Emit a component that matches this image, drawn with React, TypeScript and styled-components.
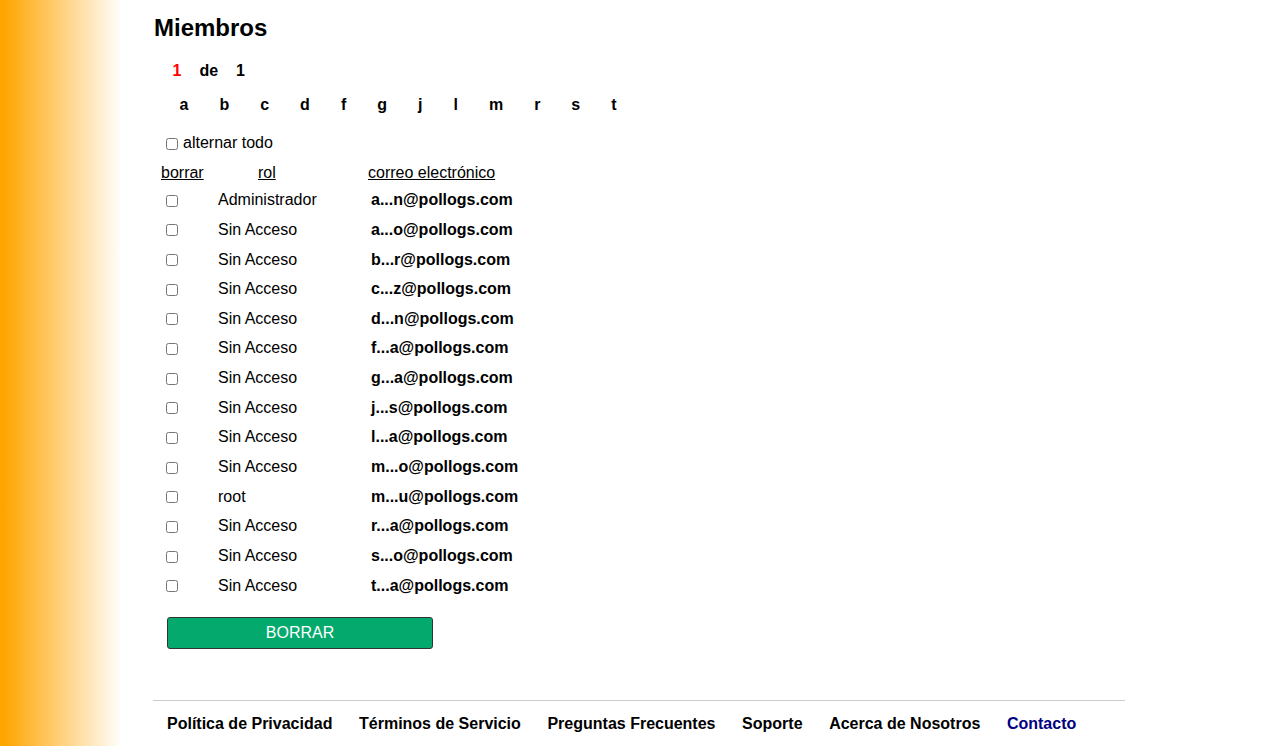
import React from "react";
import styled, { createGlobalStyle } from "styled-components";

// ---------- Global ----------

const GlobalStyle = createGlobalStyle`
  html, body {
    margin: 0;
    padding: 0;
    background: #fff;
  }
  body {
    font-family: "Liberation Sans", Arial, sans-serif;
    font-size: 16px;
    color: #000;
  }
`;

// ---------- Styled Components ----------

const Page = styled.div`
  display: flex;
  min-height: 100vh;
`;

const Sidebar = styled.aside`
  flex: 0 0 125px;
  background: linear-gradient(to right, #ffa500 4px, #ffffff 122px);
`;

const Main = styled.main`
  flex: 1;
  padding-left: 28px;
`;

const Content = styled.div`
  width: 972px;
  display: flex;
  flex-direction: column;
`;

const Title = styled.h2`
  margin: 14px 0 0;
  padding-left: 1px;
  font-size: 24px;
  line-height: 28px;
  font-weight: bold;
`;

const Pager = styled.div`
  display: flex;
  gap: 18px;
  margin-top: 19px;
  padding-left: 19.5px;
  line-height: 20px;
  font-weight: bold;
`;

const PagerItem = styled.span<{ $current?: boolean }>`
  color: ${(p) => (p.$current ? "#ff0000" : "#000")};
`;

const Letters = styled.div`
  display: flex;
  gap: 31px;
  margin-top: 13.5px;
  padding-left: 26.5px;
  line-height: 20px;
  font-weight: bold;
`;

const LetterLink = styled.a`
  color: #000;
  text-decoration: none;
  cursor: pointer;
`;

const ToggleAll = styled.label`
  display: flex;
  align-items: center;
  gap: 5px;
  margin-top: 18.3px;
  padding-left: 13px;
  line-height: 20px;
`;

const Check = styled.input.attrs({ type: "checkbox" })`
  width: 12px;
  height: 12px;
  margin: 0;
  flex: none;
`;

const ToggleCheck = styled(Check)`
  margin-top: 2px;
`;

const HeaderRow = styled.div`
  display: grid;
  grid-template-columns: 97px 110px 1fr;
  margin-top: 10.2px;
  padding-left: 8px;
  line-height: 20px;
`;

const HeaderLink = styled.a`
  color: #000;
  text-decoration: underline;
  justify-self: start;
  cursor: pointer;
`;

const MemberList = styled.div`
  display: flex;
  flex-direction: column;
  margin-top: 2.4px;
`;

const MemberRow = styled.div`
  display: grid;
  grid-template-columns: 52px 153px 1fr;
  align-items: center;
  height: 29.67px;
  padding-left: 13px;
  line-height: 20px;
`;

const RowCheck = styled(Check)`
  margin-top: 1px;
`;

const Role = styled.span``;

const Email = styled.span`
  font-weight: bold;
`;

const DeleteButton = styled.button`
  align-self: flex-start;
  margin: 16.5px 0 0 14px;
  width: 266px;
  height: 32px;
  padding: 0;
  background: #04aa6d;
  border: 1px solid #333;
  border-radius: 3px;
  color: #fff;
  font-family: "Liberation Sans", Arial, sans-serif;
  font-size: 16px;
  cursor: pointer;
`;

const Footer = styled.footer`
  display: flex;
  gap: 26.6px;
  margin-top: 50.7px;
  padding: 13px 0 0 14px;
  border-top: 1px solid #cccccc;
  line-height: 20px;
  font-weight: bold;
`;

const FooterLink = styled.a<{ $highlight?: boolean }>`
  color: ${(p) => (p.$highlight ? "#000080" : "#000")};
  text-decoration: none;
  cursor: pointer;
`;

// ---------- Data ----------

const letters = ["a", "b", "c", "d", "f", "g", "j", "l", "m", "r", "s", "t"];

const members = [
  { role: "Administrador", email: "a...n@pollogs.com" },
  { role: "Sin Acceso", email: "a...o@pollogs.com" },
  { role: "Sin Acceso", email: "b...r@pollogs.com" },
  { role: "Sin Acceso", email: "c...z@pollogs.com" },
  { role: "Sin Acceso", email: "d...n@pollogs.com" },
  { role: "Sin Acceso", email: "f...a@pollogs.com" },
  { role: "Sin Acceso", email: "g...a@pollogs.com" },
  { role: "Sin Acceso", email: "j...s@pollogs.com" },
  { role: "Sin Acceso", email: "l...a@pollogs.com" },
  { role: "Sin Acceso", email: "m...o@pollogs.com" },
  { role: "root", email: "m...u@pollogs.com" },
  { role: "Sin Acceso", email: "r...a@pollogs.com" },
  { role: "Sin Acceso", email: "s...o@pollogs.com" },
  { role: "Sin Acceso", email: "t...a@pollogs.com" },
];

const footerLinks = [
  "Política de Privacidad",
  "Términos de Servicio",
  "Preguntas Frecuentes",
  "Soporte",
  "Acerca de Nosotros",
  "Contacto",
];

// ---------- App ----------

export default function App() {
  return (
    <>
      <GlobalStyle />
      <Page>
        <Sidebar />
        <Main>
          <Content>
            <Title>Miembros</Title>

            <Pager>
              <PagerItem $current>1</PagerItem>
              <PagerItem>de</PagerItem>
              <PagerItem>1</PagerItem>
            </Pager>

            <Letters>
              {letters.map((l) => (
                <LetterLink key={l}>{l}</LetterLink>
              ))}
            </Letters>

            <ToggleAll>
              <ToggleCheck />
              alternar todo
            </ToggleAll>

            <HeaderRow>
              <HeaderLink>borrar</HeaderLink>
              <HeaderLink>rol</HeaderLink>
              <HeaderLink>correo electrónico</HeaderLink>
            </HeaderRow>

            <MemberList>
              {members.map((m) => (
                <MemberRow key={m.email}>
                  <RowCheck />
                  <Role>{m.role}</Role>
                  <Email>{m.email}</Email>
                </MemberRow>
              ))}
            </MemberList>

            <DeleteButton>BORRAR</DeleteButton>

            <Footer>
              {footerLinks.map((f) => (
                <FooterLink key={f} $highlight={f === "Contacto"}>
                  {f}
                </FooterLink>
              ))}
            </Footer>
          </Content>
        </Main>
      </Page>
    </>
  );
}
